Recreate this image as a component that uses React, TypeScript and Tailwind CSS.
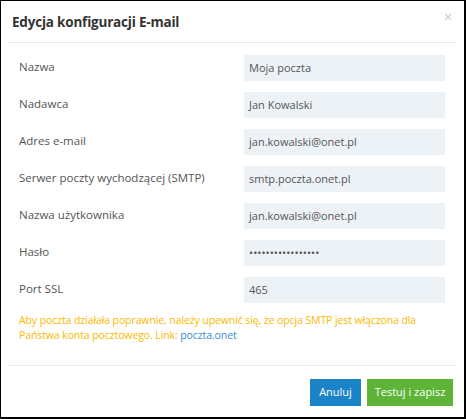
import React from "react";

const rows: { label: string; value: string }[] = [
  { label: "Nazwa", value: "Moja poczta" },
  { label: "Nadawca", value: "Jan Kowalski" },
  { label: "Adres e-mail", value: "jan.kowalski@onet.pl" },
  { label: "Serwer poczty wychodzącej (SMTP)", value: "smtp.poczta.onet.pl" },
  { label: "Nazwa użytkownika", value: "jan.kowalski@onet.pl" },
  { label: "Hasło", value: "•••••••••••••••••" },
  { label: "Port SSL", value: "465" },
];

export default function App() {
  return (
    <div
      className="w-[466px] h-[419px] bg-white border-l border-t border-r-2 border-b-2 border-black flex flex-col text-[#444]"
      style={{ fontFamily: '"Open Sans", "Noto Sans", sans-serif' }}
    >
      <div className="flex items-center justify-between pl-[11px] pr-[12px] h-[41px] pt-[1px]">
        <div className="text-[13.5px] font-bold text-[#333] tracking-[-0.2px]">Edycja konfiguracji E-mail</div>
        <div className="text-[14px] text-[#c8c8c8] leading-none -mt-[10px]">×</div>
      </div>
      <div className="mx-[7px] h-px bg-[#e8e8e8]" />
      <div className="flex flex-col gap-[11px] pt-[12px] pl-[18px] pr-[19px]">
        {rows.map((r) => (
          <div key={r.label} className="flex items-center h-[26px]">
            <div className="w-[225px] text-[11.5px] text-[#555] -mt-[2px]">{r.label}</div>
            <div className="flex-1 h-[26px] bg-[#edf2f7] flex items-center pl-[5px] text-[11px] text-[#555]">
              {r.value}
            </div>
          </div>
        ))}
      </div>
      <div className="pl-[18px] pr-[19px] pt-[10px] text-[10.5px] leading-[15px] text-[#fbb900] tracking-[-0.1px]">
        Aby poczta działała poprawnie, należy upewnić się, że opcja SMTP jest włączona dla Państwa konta pocztowego. Link:{" "}
        <span className="text-[#3a8cd6]">poczta.onet</span>
      </div>
      <div className="mx-[7px] h-px bg-[#ececec] mt-[22px]" />
      <div className="flex justify-end gap-[6px] pt-[13px] pr-[11px]">
        <div className="w-[51px] h-[27px] bg-[#1b83c8] text-white text-[11px] flex items-center justify-center">Anuluj</div>
        <div className="w-[86px] h-[27px] bg-[#5db436] text-white text-[11px] flex items-center justify-center">Testuj i zapisz</div>
      </div>
    </div>
  );
}
